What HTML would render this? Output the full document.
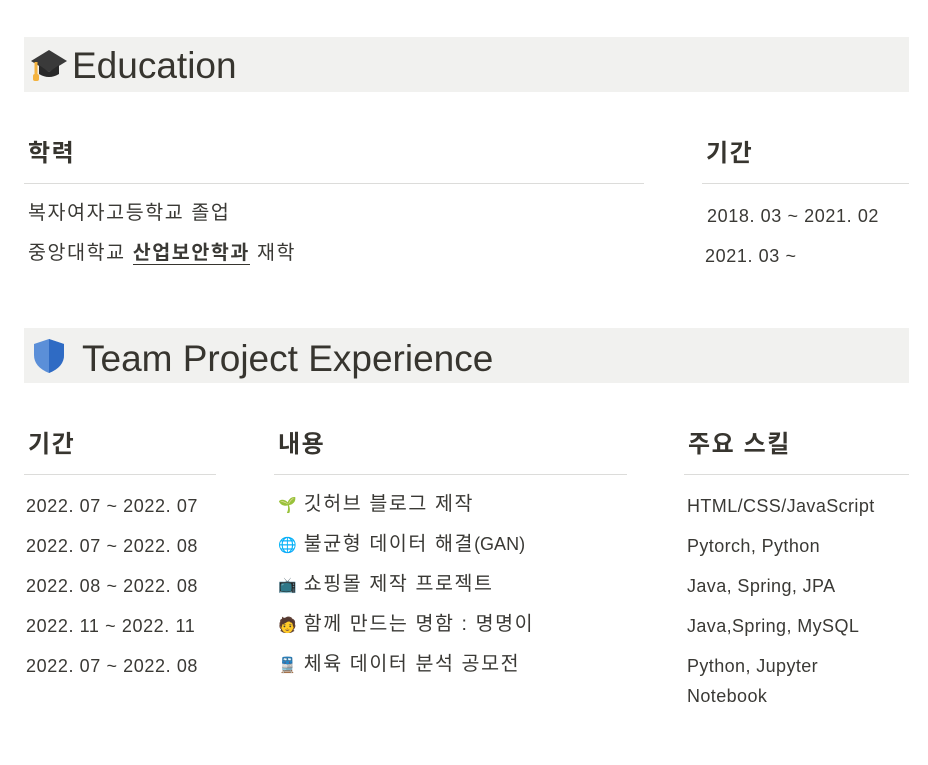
<!DOCTYPE html><html><head><meta charset="utf-8"><style>
body{margin:0;width:928px;height:765px;background:#fff;position:relative;font-family:"Liberation Sans","Noto Sans CJK KR",sans-serif;color:#37352f;overflow:hidden}
.a{position:absolute;white-space:nowrap}
.bar{position:absolute;left:24px;width:885px;height:55px;background:#f1f1ef}
.h1{font-size:37px;font-weight:500;line-height:55px}
.th{font-size:24px;font-weight:bold;line-height:30px;letter-spacing:1.6px}
.ln{position:absolute;height:1px;background:#dcdcda}
.td{font-size:18px;line-height:24px;color:#3a3935}
.k{font-size:19.5px;letter-spacing:1.6px}
.n{letter-spacing:0.6px}
.e{font-size:15px;letter-spacing:0}
</style></head><body>
<div class="bar" style="top:37px"></div>
<div class="a" style="left:30px;top:46px;width:38px;height:38px">
<svg width="38" height="38" viewBox="0 0 38 38"><polygon points="19,4 37,15 19,26 1,15" fill="#3a3a3a"/><path d="M9,19 L9,28 Q19,34 29,28 L29,19 L19,26Z" fill="#292929"/><path d="M6,16 L6,30" stroke="#f4b33f" stroke-width="3"/><rect x="3" y="28" width="6" height="7" rx="2" fill="#f4b33f"/></svg></div>
<div class="a h1" style="left:72px;top:38px">Education</div>
<div class="a th" style="left:28px;top:139px">학력</div>
<div class="a th" style="left:706px;top:139px">기간</div>
<div class="ln" style="left:24px;width:620px;top:183px"></div>
<div class="ln" style="left:702px;width:207px;top:183px"></div>
<div class="a td k" style="left:28px;top:201px">복자여자고등학교 졸업</div>
<div class="a td k" style="left:28px;top:241px">중앙대학교 <b style="border-bottom:1px solid #37352f">산업보안학과</b> 재학</div>
<div class="a td n" style="left:707px;top:204px">2018. 03 ~ 2021. 02</div>
<div class="a td n" style="left:705px;top:244px">2021. 03 ~</div>
<div class="bar" style="top:328px"></div>
<div class="a" style="left:32px;top:337px"><svg width="34" height="38" viewBox="0 0 34 38"><path d="M17,2 L32,7 L32,18 Q32,30 17,36 Q2,30 2,18 L2,7Z" fill="#5b8fd8"/><path d="M17,2 L32,7 L32,18 Q32,30 17,36Z" fill="#2f6bc4"/></svg></div>
<div class="a h1" style="left:82px;top:331px">Team Project Experience</div>
<div class="a th" style="left:28px;top:430px">기간</div>
<div class="a th" style="left:278px;top:430px">내용</div>
<div class="a th" style="left:688px;top:430px">주요 스킬</div>
<div class="ln" style="left:24px;width:192px;top:474px"></div>
<div class="ln" style="left:274px;width:353px;top:474px"></div>
<div class="ln" style="left:684px;width:225px;top:474px"></div>
<div class="a td n" style="left:26px;top:494px">2022. 07 ~ 2022. 07</div>
<div class="a td n" style="left:26px;top:534px">2022. 07 ~ 2022. 08</div>
<div class="a td n" style="left:26px;top:574px">2022. 08 ~ 2022. 08</div>
<div class="a td n" style="left:26px;top:614px">2022. 11 ~ 2022. 11</div>
<div class="a td n" style="left:26px;top:654px">2022. 07 ~ 2022. 08</div>
<div class="a td k" style="left:278px;top:492px"><span class="e">🌱</span> 깃허브 블로그 제작</div>
<div class="a td k" style="left:278px;top:532px"><span class="e">🌐</span> 불균형 데이터 해결<span style="letter-spacing:0;font-size:18px">(GAN)</span></div>
<div class="a td k" style="left:278px;top:572px"><span class="e">📺</span> 쇼핑몰 제작 프로젝트</div>
<div class="a td k" style="left:278px;top:612px"><span class="e">🧑</span> 함께 만드는 명함 : 명명이</div>
<div class="a td k" style="left:278px;top:652px"><span class="e">🚆</span> 체육 데이터 분석 공모전</div>
<div class="a td" style="left:687px;top:494px;letter-spacing:0.4px">HTML/CSS/JavaScript</div>
<div class="a td" style="left:687px;top:534px;letter-spacing:0.4px">Pytorch, Python</div>
<div class="a td" style="left:687px;top:574px;letter-spacing:0.4px">Java, Spring, JPA</div>
<div class="a td" style="left:687px;top:614px;letter-spacing:0.4px">Java,Spring, MySQL</div>
<div class="a td" style="left:687px;top:651px;line-height:30px;letter-spacing:0.4px">Python, Jupyter<br>Notebook</div>
</body></html>
